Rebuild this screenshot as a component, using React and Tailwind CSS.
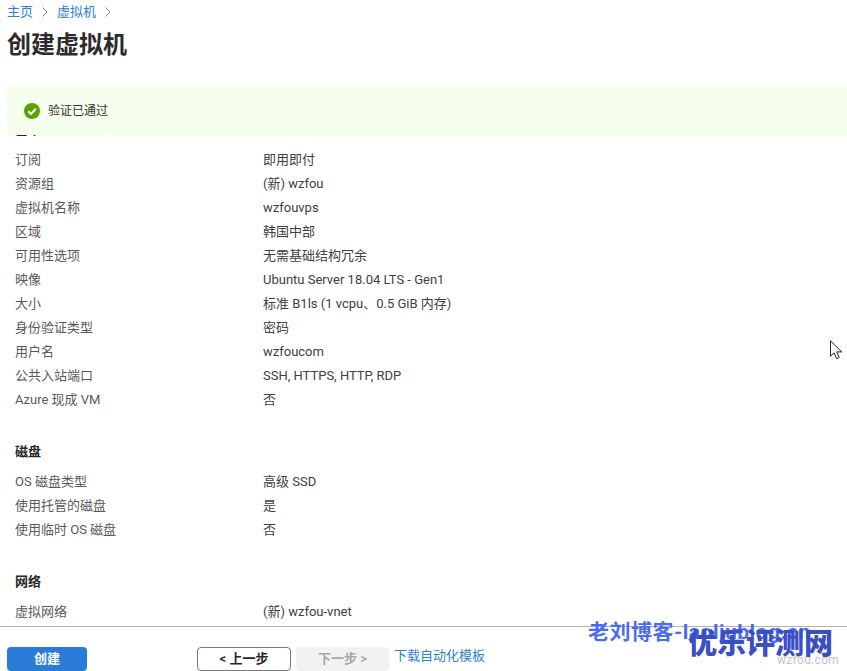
import React from "react";

const basics = [
  ["订阅", "即用即付"],
  ["资源组", "(新) wzfou"],
  ["虚拟机名称", "wzfouvps"],
  ["区域", "韩国中部"],
  ["可用性选项", "无需基础结构冗余"],
  ["映像", "Ubuntu Server 18.04 LTS - Gen1"],
  ["大小", "标准 B1ls (1 vcpu、0.5 GiB 内存)"],
  ["身份验证类型", "密码"],
  ["用户名", "wzfoucom"],
  ["公共入站端口", "SSH, HTTPS, HTTP, RDP"],
  ["Azure 现成 VM", "否"],
];

const disks = [
  ["OS 磁盘类型", "高级 SSD"],
  ["使用托管的磁盘", "是"],
  ["使用临时 OS 磁盘", "否"],
];

const network = [["虚拟网络", "(新) wzfou-vnet"]];

function Section({ title, rows, className = "" }) {
  return (
    <div className={className}>
      <h3 className="h-6 mb-1.5 leading-6 text-[13px] font-semibold text-[#262626]">{title}</h3>
      {rows.map(([label, value]) => (
        <div key={label} className="flex h-6 items-center text-[13px]">
          <div className="w-[248px] shrink-0 text-[#595959]">{label}</div>
          <div className="text-[#404040]">{value}</div>
        </div>
      ))}
    </div>
  );
}

function Chevron() {
  return (
    <svg width="8" height="12" viewBox="0 0 8 12" fill="none" stroke="#8a8a8a" strokeWidth="1">
      <path d="M1.5 1.5 6 6l-4.5 4.5" />
    </svg>
  );
}

export default function App() {
  return (
    <div
      className="relative flex h-[671px] w-[847px] flex-col overflow-hidden bg-white"
      style={{ fontFamily: 'Roboto, "Noto Sans CJK SC", sans-serif' }}
    >
      {/* Header */}
      <div className="h-[85px] shrink-0 pl-[7px]">
        <nav className="flex h-6 items-center gap-2 text-[13px] text-[#2f7ed8]">
          <a>主页</a>
          <Chevron />
          <a>虚拟机</a>
          <Chevron />
        </nav>
        <h1 className="mt-[3px] text-2xl leading-9 font-bold text-[#2b2b2b]">创建虚拟机</h1>
      </div>

      {/* Validation banner */}
      <div className="ml-[7px] flex h-[50px] shrink-0 items-center gap-2 bg-[#f6ffee] pl-[17px] pt-[2px] text-xs text-[#333333]">
        <svg width="16" height="16" viewBox="0 0 16 16">
          <circle cx="8" cy="8" r="8" fill="#57a300" />
          <path d="M4.2 8.2 7 11l4.8-5.2" fill="none" stroke="#fff" strokeWidth="2" />
        </svg>
        <span>验证已通过</span>
      </div>

      {/* Summary */}
      <div className="min-h-0 flex-1 overflow-hidden pl-[15px]">
        <div className="-mt-[17px]">
          <Section title="基本" rows={basics} />
          <Section title="磁盘" rows={disks} className="mt-7" />
          <Section title="网络" rows={network} className="mt-7" />
        </div>
      </div>

      {/* Footer */}
      <div className="flex h-[45px] shrink-0 items-end border-t border-[#b3b3b3] pl-[7px] text-[13px]">
        <button className="h-6 w-20 rounded-sm bg-[#2b7cd9] font-semibold text-white">创建</button>
        <button className="ml-[110px] h-6 w-[94px] rounded-sm border border-[#7a7a7a] bg-white font-semibold text-[#262626]">
          &lt; 上一步
        </button>
        <button className="ml-[5px] h-6 w-[93px] rounded-sm bg-[#f2f2f2] font-semibold text-[#a6a6a6]">
          下一步 &gt;
        </button>
        <a className="mb-[6px] ml-[5px] text-[#2f7ed8]">下载自动化模板</a>
      </div>

      {/* Mouse cursor */}
      <svg className="absolute left-[830px] top-[340px]" width="13" height="20" viewBox="0 0 13 20">
        <path d="M.5.8v15.4l3.6-3.4 2.4 5.8 2.6-1.1-2.4-5.6h5z" fill="#fff" stroke="#222" strokeWidth="1" />
      </svg>

      {/* Watermarks */}
      <div className="absolute left-[588px] top-[620px] text-[21px] leading-6 font-bold tracking-[0.5px] whitespace-nowrap text-[#4a6cf0]">
        老刘博客-laoliublog.cn
      </div>
      <div className="absolute left-[688px] top-[626px] text-[29px] leading-9 font-black whitespace-nowrap text-[#3b4fc4]">
        优乐评测网
      </div>
      <div className="absolute left-[777px] top-[652px] text-xs leading-4 tracking-wide text-[#c4c4c4]">wzfou.com</div>
    </div>
  );
}
